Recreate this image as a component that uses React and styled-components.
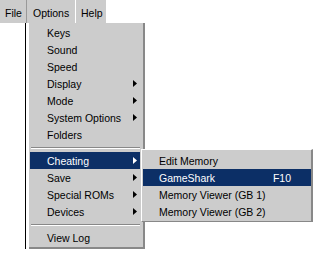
import React from "react";
import styled, { createGlobalStyle } from "styled-components";

const GlobalStyle = createGlobalStyle`
  html, body {
    margin: 0;
    padding: 0;
    background: #ffffff;
  }
  body {
    font-family: "Liberation Sans", Arial, sans-serif;
    font-size: 10.5px;
    color: #000000;
  }
`;

const mainItems = [
  { label: "Keys" },
  { label: "Sound" },
  { label: "Speed" },
  { label: "Display", sub: true },
  { label: "Mode", sub: true },
  { label: "System Options", sub: true },
  { label: "Folders" },
  { sep: true },
  { label: "Cheating", sub: true, active: true },
  { label: "Save", sub: true },
  { label: "Special ROMs", sub: true },
  { label: "Devices", sub: true },
  { sep: true },
  { label: "View Log" },
];

const cheatItems = [
  { label: "Edit Memory" },
  { label: "GameShark", key: "F10", active: true },
  { label: "Memory Viewer (GB 1)" },
  { label: "Memory Viewer (GB 2)" },
];

const Arrow = ({ light }) => (
  <svg width="4" height="7" viewBox="0 0 4 7">
    <polygon points="0,0 4,3.5 0,7" fill={light ? "#ffffff" : "#000000"} />
  </svg>
);

const App = () => {
  return (
    <Page>
      <GlobalStyle />
      <Bar>
        <BarItem w={26}>File</BarItem>
        <BarItem w={50} open>
          Options
          <Menu>
            {mainItems.map((it, i) =>
              it.sep ? (
                <Sep key={i} />
              ) : (
                <Item key={i} active={it.active}>
                  <span>{it.label}</span>
                  {it.sub && <Arrow light={it.active} />}
                  {it.active && (
                    <SubMenu>
                      {cheatItems.map((c) => (
                        <SubItem key={c.label} active={c.active}>
                          <span>{c.label}</span>
                          {c.key && <span>{c.key}</span>}
                        </SubItem>
                      ))}
                    </SubMenu>
                  )}
                </Item>
              )
            )}
          </Menu>
        </BarItem>
        <BarItem w={30}>Help</BarItem>
      </Bar>
      <Edge />
    </Page>
  );
};

export default App;

const Page = styled.div`
  width: 315px;
  height: 260px;
  background: #ffffff;
`;

const Bar = styled.div`
  display: inline-flex;
  flex-direction: row;
  height: 23px;
  background: #cccccc;
`;

const BarItem = styled.div`
  position: relative;
  display: flex;
  align-items: center;
  width: ${(p) => p.w}px;
  height: 23px;
  box-sizing: border-box;
  padding: 2px 0 0 ${(p) => (p.open ? 6 : 5)}px;
  border-left: ${(p) => (p.open ? "1px solid #999999" : "none")};
  border-right: ${(p) => (p.open ? "1px solid #ffffff" : "none")};
`;

const Menu = styled.div`
  position: absolute;
  top: 23px;
  left: 2px;
  width: 116px;
  box-sizing: border-box;
  padding: 1px 3px 1px 1px;
  background: #cccccc;
  border-right: 2px solid #888888;
  border-bottom: 2px solid #888888;
  z-index: 2;
`;

const Item = styled.div`
  position: relative;
  display: flex;
  align-items: center;
  justify-content: space-between;
  height: 17px;
  padding: 0 3px 0 17px;
  background: ${(p) => (p.active ? "#0c2f66" : "transparent")};
  color: ${(p) => (p.active ? "#ffffff" : "#000000")};
  white-space: nowrap;
`;

const Sep = styled.div`
  height: 9px;
  display: flex;
  align-items: center;
  padding: 0 0 0 1px;
  &::before {
    content: "";
    flex: 1;
    box-sizing: border-box;
    height: 2px;
    border-top: 1px solid #888888;
    border-bottom: 1px solid #ffffff;
  }
`;

const SubMenu = styled.div`
  position: absolute;
  top: -3px;
  left: 111px;
  width: 172px;
  box-sizing: border-box;
  padding: 2px 0 1px 1px;
  background: #cccccc;
  border-top: 1px solid #ffffff;
  border-left: 1px solid #ffffff;
  border-right: 2px solid #888888;
  border-bottom: 1px solid #888888;
  color: #000000;
`;

const SubItem = styled.div`
  display: flex;
  align-items: center;
  justify-content: space-between;
  height: 17px;
  padding: 0 20px 0 16px;
  background: ${(p) => (p.active ? "#0c2f66" : "transparent")};
  color: ${(p) => (p.active ? "#ffffff" : "#000000")};
  white-space: nowrap;
`;

const Edge = styled.div`
  margin-left: 25px;
  width: 1px;
  height: 226px;
  background: #000000;
`;
